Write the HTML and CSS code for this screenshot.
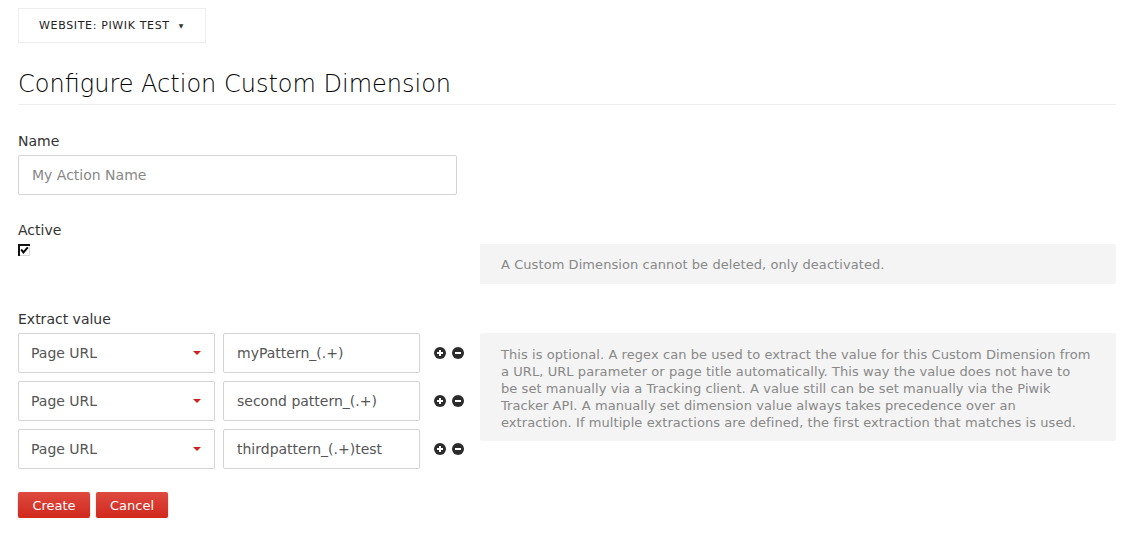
FILE: index.html
```html
<!DOCTYPE html>
<html>
<head>
<meta charset="utf-8">
<link rel="stylesheet" href="styles.css">
</head>
<body>
<div class="page">
  <div class="site-selector"><span class="site-label">Website: Piwik test</span><span class="site-caret">▼</span></div>
  <h2 class="title">Configure Action Custom Dimension</h2>

  <div class="field field-name">
    <div class="label">Name</div>
    <div class="field-grid">
      <div class="field-main"><div class="input input-wide placeholder">My Action Name</div></div>
      <div></div>
    </div>
  </div>

  <div class="field field-active">
    <div class="label">Active</div>
    <div class="field-grid">
      <div class="field-main">
        <svg class="checkbox" width="12" height="12" viewBox="0 0 12 12">
          <rect x="0" y="0" width="12" height="12" fill="#fff"/>
          <path d="M1 12 V1 H12" fill="none" stroke="#111" stroke-width="2"/>
          <path d="M11.5 2 V11.5 H2" fill="none" stroke="#d8d8d8" stroke-width="1"/>
          <path d="M3.2 5.5 L5.4 8.4 L9.8 3.4" fill="none" stroke="#000" stroke-width="2"/>
        </svg>
      </div>
      <div class="help help-short">A Custom Dimension cannot be deleted, only deactivated.</div>
    </div>
  </div>

  <div class="field field-extract">
    <div class="label">Extract value</div>
    <div class="field-grid">
      <div class="field-main extract-rows">
        <div class="extract-row">
          <div class="select"><span>Page URL</span><span class="caret"></span></div>
          <div class="input input-pattern">myPattern_(.+)</div>
          <div class="row-icons"><span class="ico plus"></span><span class="ico minus"></span></div>
        </div>
        <div class="extract-row">
          <div class="select"><span>Page URL</span><span class="caret"></span></div>
          <div class="input input-pattern">second pattern_(.+)</div>
          <div class="row-icons"><span class="ico plus"></span><span class="ico minus"></span></div>
        </div>
        <div class="extract-row">
          <div class="select"><span>Page URL</span><span class="caret"></span></div>
          <div class="input input-pattern">thirdpattern_(.+)test</div>
          <div class="row-icons"><span class="ico plus"></span><span class="ico minus"></span></div>
        </div>
      </div>
      <div class="help help-long">This is optional. A regex can be used to extract the value for this Custom Dimension from<br>a URL, URL parameter or page title automatically. This way the value does not have to<br>be set manually via a Tracking client. A value still can be set manually via the Piwik<br>Tracker API. A manually set dimension value always takes precedence over an<br>extraction. If multiple extractions are defined, the first extraction that matches is used.</div>
    </div>
  </div>

  <div class="buttons">
    <button class="btn btn-create">Create</button>
    <button class="btn btn-cancel">Cancel</button>
  </div>
</div>
</body>
</html>
```

FILE: styles.css
```css
* { box-sizing: border-box; }
html, body { margin: 0; padding: 0; background: #fff; }
body { font-family: "DejaVu Sans", Verdana, sans-serif; color: #333; }
.page { padding: 8px 10px 0 18px; }

.site-selector {
  width: 188px; height: 35px;
  border: 1px solid #eeeeee;
  display: flex; align-items: center;
  padding-left: 20px;
  font-family: "DejaVu Sans", sans-serif;
  font-size: 11px; letter-spacing: 0.65px;
  text-transform: uppercase; color: #222;
}
.site-caret { font-size: 6px; margin-left: 9px; color: #333; }

.title {
  margin: 27px 0 0 0;
  font-family: "DejaVu Sans", sans-serif;
  font-weight: 200; font-size: 24px; line-height: 28px;
  color: #000;
  padding-bottom: 6px;
  border-bottom: 1px solid #eeeeee;
}

.field { display: flex; flex-direction: column; }
.field-name { margin-top: 26px; }
.field-active { margin-top: 25px; }
.field-extract { margin-top: 25px; }
.label { font-size: 14px; line-height: 20px; margin-bottom: 4px; color: #333; }
.field-grid { display: grid; grid-template-columns: 462px 1fr; }

.input, .select {
  height: 40px; border: 1px solid #d4d4d4; border-radius: 2px;
  background: #fff; display: flex; align-items: center;
  font-size: 14px; color: #555;
}
.input-wide { width: 439px; padding-left: 13px; }
.placeholder { color: #888; }
.checkbox { display: block; margin-top: 0; }

.help {
  background: #f4f4f4; color: #888;
  font-size: 13px; letter-spacing: 0.07px; line-height: 17px; border-radius: 2px;
}
.help-short { height: 40px; padding: 12px 21px 11px 21px; }
.help-long { height: 108px; padding: 13px 10px 0 21px; white-space: nowrap; }

.extract-rows { display: flex; flex-direction: column; gap: 8px; }
.extract-row { display: flex; align-items: center; }
.select { width: 197px; padding-left: 12px; padding-right: 13px; justify-content: space-between; }
.caret { width: 0; height: 0; border-left: 4.5px solid transparent; border-right: 4.5px solid transparent; border-top: 4px solid #c7241d; }
.input-pattern { width: 197px; margin-left: 8px; padding-left: 13px; color: #555; }
.row-icons { display: flex; gap: 6px; margin-left: 14px; }
.ico { width: 12px; height: 12px; border-radius: 50%; background: #2b2b2b; position: relative; display: block; }
.ico::before { content: ""; position: absolute; left: 3px; top: 5px; width: 6px; height: 2px; background: #fff; }
.plus::after { content: ""; position: absolute; left: 5px; top: 3px; width: 2px; height: 6px; background: #fff; }

.buttons { display: flex; gap: 6px; margin-top: 23px; }
.btn {
  height: 26px; border: none; border-radius: 2px;
  background: linear-gradient(#de4a3f, #d1281d);
  color: #fff; font-family: "DejaVu Sans", sans-serif; font-size: 13px;
  box-shadow: 0 1px 2px rgba(0,0,0,0.25);
  padding: 0; cursor: pointer;
}
.btn-create { width: 72px; }
.btn-cancel { width: 72px; }
```
